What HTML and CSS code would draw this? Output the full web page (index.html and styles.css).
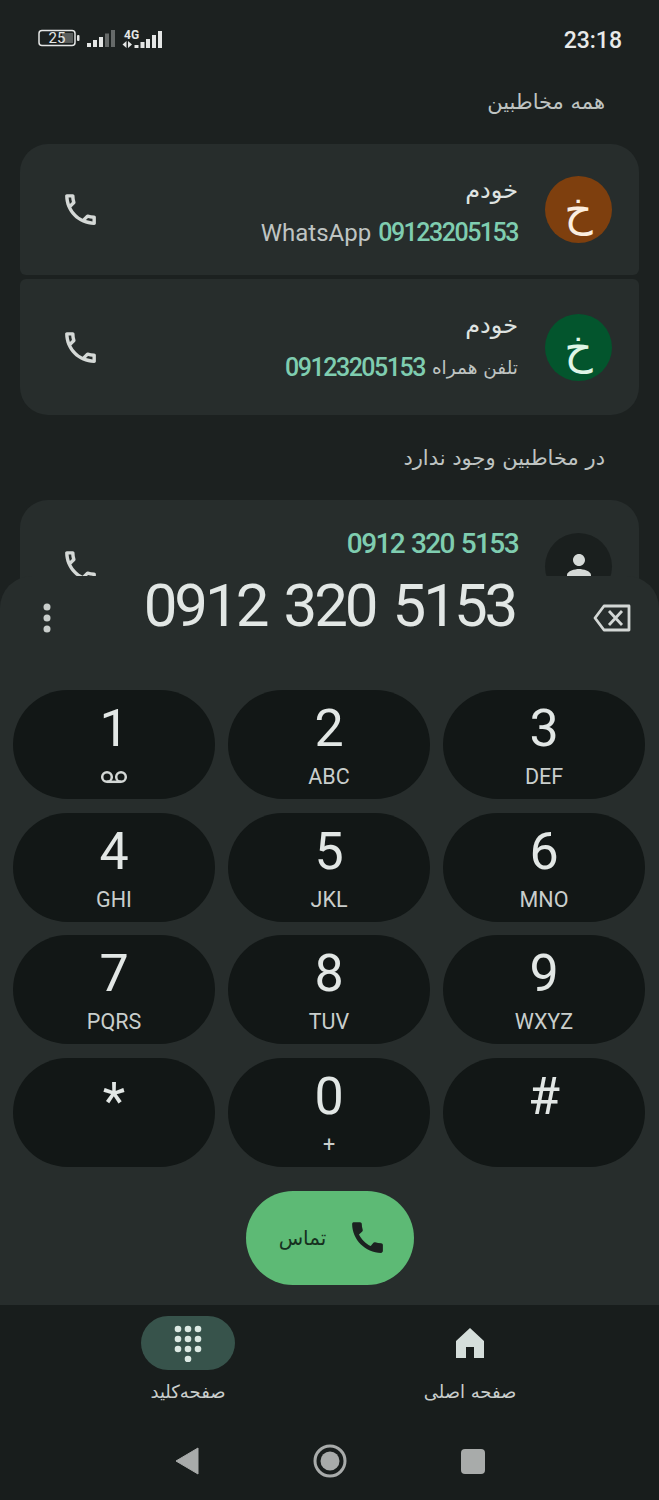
FILE: index.html
```html
<!DOCTYPE html>
<html lang="fa">
<head>
<meta charset="utf-8">
<title>Dialer</title>
<link rel="stylesheet" href="styles.css">
</head>
<body>
<svg class="defs" aria-hidden="true">
  <symbol id="call-o" viewBox="0 0 24 24"><path d="M6.54 5c.06.89.21 1.76.45 2.59l-1.2 1.2c-.41-1.2-.67-2.47-.76-3.79h1.51m9.86 12.02c.85.24 1.72.39 2.6.45v1.49c-1.32-.09-2.59-.35-3.8-.75l1.2-1.19M7.5 3H4c-.55 0-1 .45-1 1 0 9.39 7.61 17 17 17 .55 0 1-.45 1-1v-3.49c0-.55-.45-1-1-1-1.24 0-2.45-.2-3.57-.57-.1-.04-.21-.05-.31-.05-.26 0-.51.1-.71.29l-2.2 2.2c-2.83-1.45-5.15-3.76-6.59-6.59l2.2-2.2c.28-.28.36-.67.25-1.02C8.7 6.45 8.5 5.25 8.5 4c0-.55-.45-1-1-1z"/></symbol>
</svg>
<div class="phone">
  <header class="status">
    <div class="status-icons">
      <svg class="battery" width="42" height="18" viewBox="0 0 42 18">
        <rect x="1" y="1.500" width="36" height="15" rx="3" fill="none" stroke="#e4e6e5" stroke-width="1.500"/>
        <rect x="24" y="4" width="11" height="10" fill="#5a5e5d"/>
        <rect x="39" y="6" width="2.500" height="6" rx="1" fill="#e4e6e5"/>
        <text x="19" y="14" class="battery-text" text-anchor="middle">25</text>
      </svg>
      <svg class="signal" width="28" height="18" viewBox="0 0 28 18">
        <g fill="#e4e6e5"><rect x="0" y="14" width="4" height="4"/><rect x="6" y="11" width="4" height="7"/><rect x="12" y="8" width="4" height="10"/></g>
        <g fill="#666a69"><rect x="18" y="4.500" width="4" height="13.500"/><rect x="24" y="1" width="4" height="17"/></g>
      </svg>
      <svg class="signal-4g" width="40" height="20" viewBox="0 0 40 20">
        <text x="2" y="9.500" class="net-text">4G</text>
        <g fill="#e4e6e5"><path d="M4.500 12v7l-4-3.500zM6 19v-7l4 3.500z"/><rect x="12.500" y="16" width="4" height="3"/><rect x="18.500" y="13" width="4" height="6"/><rect x="24" y="10" width="4" height="9"/><rect x="30" y="6" width="4" height="13"/><rect x="36" y="2" width="4" height="17"/></g>
      </svg>
    </div>
    <time class="clock">23:18</time>
  </header>

  <main class="content">
    <div class="list" dir="rtl">
      <h2 class="section-title">همه مخاطبین</h2>
      <div class="group">
        <article class="contact contact-first">
          <div class="avatar avatar-brown">خ</div>
          <div class="info">
            <div class="name">خودم</div>
            <div class="sub"><span class="num">09123205153</span><span class="latin">WhatsApp</span></div>
          </div>
          <svg class="call-icon"><use href="#call-o"/></svg>
        </article>
        <article class="contact contact-last">
          <div class="avatar avatar-green">خ</div>
          <div class="info info-last">
            <div class="name">خودم</div>
            <div class="sub"><span class="label-fa">تلفن همراه</span><span class="num">09123205153</span></div>
          </div>
          <svg class="call-icon"><use href="#call-o"/></svg>
        </article>
      </div>
      <h2 class="section-title section-second">در مخاطبین وجود ندارد</h2>
      <article class="contact contact-solo">
        <div class="avatar avatar-dark">
          <svg width="36" height="36" viewBox="0 0 24 24" fill="#d5d9d7"><path d="M12 12c2.210 0 4-1.790 4-4s-1.790-4-4-4-4 1.790-4 4 1.790 4 4 4zm0 2c-2.670 0-8 1.340-8 4v2h16v-2c0-2.660-5.330-4-8-4z"/></svg>
        </div>
        <div class="info info-solo">
          <div class="sub"><span class="num num-large">0912 320 5153</span></div>
        </div>
        <svg class="call-icon"><use href="#call-o"/></svg>
      </article>
    </div>

    <section class="sheet">
      <div class="entry">
        <svg class="more" width="8" height="30" viewBox="0 0 8 30" fill="#c9cecc"><circle cx="4" cy="4" r="3.500"/><circle cx="4" cy="15" r="3.500"/><circle cx="4" cy="26" r="3.500"/></svg>
        <div class="number">0912 320 5153</div>
        <svg class="backspace" width="38" height="28" viewBox="0 0 38 28" fill="none" stroke="#d3d7d5" stroke-width="2.800"><path d="M36 2H11L2 14l9 12h25z" stroke-linejoin="round"/><path d="M16 7l13 14M29 7L16 21"/></svg>
      </div>
      <div class="keypad">
        <button class="key"><span class="digit">1</span><span class="letters"><svg width="28" height="14" viewBox="0 0 28 14" fill="none" stroke="#d3d7d5" stroke-width="2.500"><circle cx="7" cy="7" r="4.800"/><circle cx="21" cy="7" r="4.800"/><path d="M7 11.800h14"/></svg></span></button>
        <button class="key"><span class="digit">2</span><span class="letters">ABC</span></button>
        <button class="key"><span class="digit">3</span><span class="letters">DEF</span></button>
        <button class="key"><span class="digit">4</span><span class="letters">GHI</span></button>
        <button class="key"><span class="digit">5</span><span class="letters">JKL</span></button>
        <button class="key"><span class="digit">6</span><span class="letters">MNO</span></button>
        <button class="key"><span class="digit">7</span><span class="letters">PQRS</span></button>
        <button class="key"><span class="digit">8</span><span class="letters">TUV</span></button>
        <button class="key"><span class="digit">9</span><span class="letters">WXYZ</span></button>
        <button class="key"><span class="digit digit-star">*</span></button>
        <button class="key"><span class="digit">0</span><span class="letters">+</span></button>
        <button class="key"><span class="digit">#</span></button>
      </div>
      <div class="call-row">
        <button class="call-btn" dir="rtl">
          <svg class="call-btn-icon" viewBox="0 0 24 24" fill="#1c2120"><path d="M20.010 15.380c-1.230 0-2.420-.2-3.530-.56-.35-.12-.74-.03-1.010.24l-1.570 1.970c-2.830-1.350-5.480-3.900-6.890-6.830l1.950-1.660c.27-.28.35-.67.24-1.020-.37-1.110-.56-2.300-.56-3.530 0-.54-.45-.99-.99-.99H4.190C3.650 3 3 3.240 3 3.990 3 13.280 10.730 21 20.010 21c.71 0 .99-.63.99-1.180v-3.450c0-.54-.45-.99-.99-.99z"/></svg>
          <span>تماس</span>
        </button>
      </div>
    </section>
  </main>

  <nav class="tabs">
    <div class="tab">
      <div class="tab-pill tab-pill-active">
        <svg width="30" height="38" viewBox="0 0 30 38" fill="#dbe9e3"><circle cx="5" cy="5" r="3.300"/><circle cx="15" cy="5" r="3.300"/><circle cx="25" cy="5" r="3.300"/><circle cx="5" cy="15" r="3.300"/><circle cx="15" cy="15" r="3.300"/><circle cx="25" cy="15" r="3.300"/><circle cx="5" cy="25" r="3.300"/><circle cx="15" cy="25" r="3.300"/><circle cx="25" cy="25" r="3.300"/><circle cx="15" cy="35" r="3.300"/></svg>
      </div>
      <div class="tab-label">صفحه‌کلید</div>
    </div>
    <div class="tab">
      <div class="tab-pill">
        <svg width="28" height="30" viewBox="0 0 28 30" fill="#d5dedb"><path d="M14 0L28 13v17H18V19h-8v11H0V13z"/></svg>
      </div>
      <div class="tab-label">صفحه اصلی</div>
    </div>
  </nav>

  <div class="sysnav">
    <svg width="24" height="28" viewBox="0 0 24 28" fill="#a8abaa"><path d="M23 1v26L1 14z" stroke="#a8abaa" stroke-linejoin="round"/></svg>
    <svg width="34" height="34" viewBox="0 0 34 34"><circle cx="17" cy="17" r="15" fill="none" stroke="#a8abaa" stroke-width="3"/><circle cx="17" cy="17" r="9.500" fill="#a8abaa"/></svg>
    <div class="sys-square"></div>
  </div>
</div>
</body>
</html>
```
FILE: styles.css
```css
* { box-sizing: border-box; }
html, body { margin: 0; padding: 0; background: #1c2120; }
body { font-family: Roboto, "DejaVu Sans", sans-serif; color: #e0e4e2; }
.defs { position: absolute; width: 0; height: 0; }
.phone { width: 659px; height: 1500px; display: flex; flex-direction: column; overflow: hidden; background: #1c2120; }

.status { height: 80px; flex: none; display: flex; justify-content: space-between; align-items: flex-start; padding: 29px 37px 0 38px; }
.status-icons { display: flex; align-items: flex-start; gap: 7px; }
.battery-text { font: 15px Roboto, sans-serif; fill: #e4e6e5; }
.net-text { font: 700 12px Roboto, sans-serif; fill: #e4e6e5; }
.clock { font-size: 23px; font-weight: 500; line-height: 22px; color: #e8eae9; margin-top: 1px; }

.content { flex: 1; position: relative; overflow: hidden; }
.list { padding: 0 20px; }
.section-title { margin: 0; padding: 0 34px 0 0; font-family: "DejaVu Sans", sans-serif; font-weight: 400; font-size: 21px; line-height: 44px; color: #bfc4c2; }
.section-second { margin-top: 21px; }
.group { display: flex; flex-direction: column; gap: 4px; margin-top: 20px; }
.contact { display: flex; align-items: center; background: #272d2c; padding: 0 27px 0 40px; }
.contact-first { height: 131px; border-radius: 28px 28px 6px 6px; }
.contact-last { height: 136px; border-radius: 6px 6px 28px 28px; }
.contact-solo { height: 132px; border-radius: 28px; margin-top: 20px; }
.avatar { width: 67px; height: 67px; flex: none; border-radius: 50%; display: flex; align-items: center; justify-content: center; font-family: "DejaVu Sans", sans-serif; font-size: 44px; color: #fbeee0; }
.avatar-brown { background: #7e3f0e; }
.avatar-green { background: #03552d; color: #dff5e6; }
.avatar-dark { background: #1a1f1e; }
.info { flex: 1; padding: 2px 27px 0 0; display: flex; flex-direction: column; gap: 12px; }
.info-last { margin-bottom: 4px; }
.info-solo { padding-top: 0; margin-bottom: 44px; }
.name { font-family: "DejaVu Sans", sans-serif; font-size: 24px; line-height: 32px; color: #dfe3e1; }
.sub { display: flex; align-items: center; gap: 7px; font-size: 24px; line-height: 30px; color: #bfc4c2; }
.num { direction: ltr; font-size: 25px; color: #7fcdb0; font-weight: 500; letter-spacing: -1.500px; }
.num-large { font-size: 28px; letter-spacing: -1.600px; word-spacing: 1.500px; }
.latin { direction: ltr; }
.label-fa { font-family: "DejaVu Sans", sans-serif; font-size: 18.500px; }
.call-icon { width: 41px; height: 41px; flex: none; fill: #d5d9d7; }

.sheet { position: absolute; left: 0; right: 0; bottom: 0; height: 729px; background: #272d2c; border-radius: 32px 32px 0 0; display: flex; flex-direction: column; padding: 0 14px; }
.entry { height: 114px; flex: none; display: flex; align-items: center; justify-content: space-between; padding: 0 14px 42px 29px; }
.number { font-size: 60px; font-weight: 400; letter-spacing: -3px; word-spacing: 5px; line-height: 60px; color: #e2e7e5; margin: -12px 0 0 15px; }
.more { margin-top: 12px; }
.backspace { margin-top: 12px; }
.keypad { display: grid; grid-template-columns: repeat(3, 202px); grid-auto-rows: 109px; column-gap: 13px; row-gap: 13.500px; margin-left: -1px; }
.key { border: 0; padding: 14px 0 0; background: #121716; border-radius: 54.500px; display: flex; flex-direction: column; align-items: center; font-family: Roboto, sans-serif; color: #e2e7e5; }
.digit { font-size: 52px; line-height: 50px; height: 50px; }
.digit-star { margin-top: 5px; }
.letters { font-size: 21.500px; line-height: 26px; height: 26px; margin-top: 10px; color: #c9cecc; display: flex; align-items: center; }
.call-row { display: flex; justify-content: center; margin-top: 24px; }
.call-btn { width: 168px; height: 94px; border: 0; border-radius: 47px; background: #5dba75; display: flex; align-items: center; justify-content: center; gap: 21px; color: #16301f; font-family: "DejaVu Sans", sans-serif; font-size: 20px; padding: 0 0 0 8px; }
.call-btn-icon { width: 41px; height: 41px; }

.tabs { height: 123px; flex: none; background: #181d1c; display: grid; grid-template-columns: 282px 282px; padding: 11px 48px 0 47px; }
.tab { display: flex; flex-direction: column; align-items: center; }
.tab-pill { width: 94px; height: 54px; border-radius: 27px; display: flex; align-items: center; justify-content: center; }
.tab-pill-active { background: #37534b; }
.tab-label { font-family: "DejaVu Sans", sans-serif; font-size: 18px; line-height: 30px; margin-top: 7px; color: #c9cecc; }
.sysnav { height: 72px; flex: none; background: #181d1c; display: flex; justify-content: center; align-items: center; gap: 114px; padding-bottom: 6px; }
.sys-square { width: 24px; height: 25px; border-radius: 4px; background: #a8abaa; }
```
